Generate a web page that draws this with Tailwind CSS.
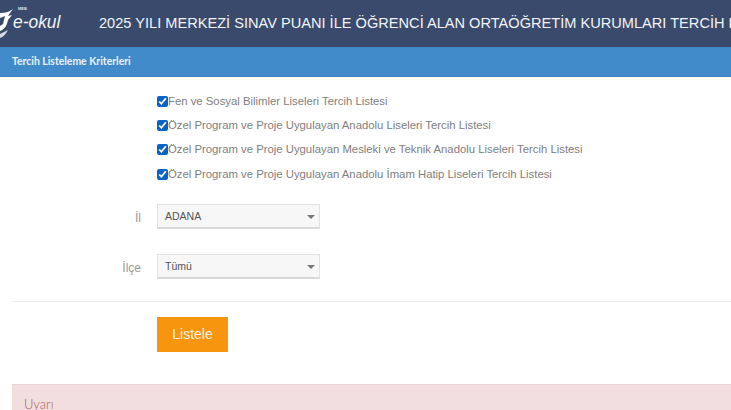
<!DOCTYPE html>
<html lang="tr">
<head>
	<title>Tercih Listeleme</title>
	<meta name="viewport" content="width=device-width, initial-scale=1">
	<script src="https://cdn.jsdelivr.net/npm/@tailwindcss/browser@4"></script>
</head>
<body>
	<div class="w-[731px] h-[410px] overflow-hidden bg-white font-['Liberation_Sans',sans-serif]">
		<!-- header -->
		<div class="flex items-center h-[47px] bg-[#3a4a6c] whitespace-nowrap">
			<div class="relative w-[99px] h-[47px] shrink-0">
				<svg class="absolute left-0 top-0" width="24" height="42" viewBox="0 0 24 42">
					<path d="M0 13 C5 13 9 12 13 9 C11 12 9 14 8 16 L12 15 L8 20 C7 25 5 29 0 31 Z" fill="#fff"/>
					<path d="M0 18 L5 16 L3 24 L0 26 Z" fill="#3a4a6c"/>
					<path d="M0 34 L8 30 C6 34 3 37 0 38 Z" fill="#d5dae4"/>
				</svg>
				<span class="absolute left-[18px] top-[6px] text-[4px] font-bold text-[#dfe3ea]">MEB</span>
				<span class="absolute left-[13px] top-[8px] text-[17.4px] leading-[26px] italic text-[#f2f4f7] scale-y-110 origin-left">e-okul</span>
			</div>
			<h1 class="text-[14.6px] text-[#f2f4f7]">2025 YILI MERKEZİ SINAV PUANI İLE ÖĞRENCİ ALAN ORTAÖĞRETİM KURUMLARI TERCİH PUANLARI</h1>
		</div>

		<!-- panel heading -->
		<div class="flex items-center h-[30px] px-3 bg-[#428bca] border-b border-[#3d80bb]">
			<span class="font-['Lato',sans-serif] text-[10.4px] font-bold text-[#eaf2fa]">Tercih Listeleme Kriterleri</span>
		</div>

		<!-- checkboxes -->
		<div class="flex flex-col pl-[157px] pt-[12px] text-[11.33px] text-[#808080] whitespace-nowrap">
			<label class="flex items-center h-[24.3px]"><input type="checkbox" checked class="w-[11px] h-[11px] accent-[#0b63c5]"><span>Fen ve Sosyal Bilimler Liseleri Tercih Listesi</span></label>
			<label class="flex items-center h-[24.3px]"><input type="checkbox" checked class="w-[11px] h-[11px] accent-[#0b63c5]"><span>Özel Program ve Proje Uygulayan Anadolu Liseleri Tercih Listesi</span></label>
			<label class="flex items-center h-[24.3px]"><input type="checkbox" checked class="w-[11px] h-[11px] accent-[#0b63c5]"><span>Özel Program ve Proje Uygulayan Mesleki ve Teknik Anadolu Liseleri Tercih Listesi</span></label>
			<label class="flex items-center h-[24.3px]"><input type="checkbox" checked class="w-[11px] h-[11px] accent-[#0b63c5]"><span>Özel Program ve Proje Uygulayan Anadolu İmam Hatip Liseleri Tercih Listesi</span></label>
		</div>

		<!-- selects -->
		<div class="flex flex-col gap-[25px] mt-[18px] text-[10.5px]">
			<div class="flex items-center">
				<span class="w-[142px] pr-[1px] pt-[2px] text-right text-[12px] text-[#999]">İl</span>
				<div class="flex items-center justify-between w-[163px] h-[25px] ml-[15px] pl-[7px] pr-[4px] pt-[2px] bg-[#f7f7f7] border border-[#e2e2e2] border-b-2 border-b-[#d8d8d8] text-[#555]">
					<span>ADANA</span>
					<span class="w-0 h-0 border-x-[4px] border-x-transparent border-t-[4px] border-t-[#777]"></span>
				</div>
			</div>
			<div class="flex items-center">
				<span class="w-[142px] pr-[1px] pt-[2px] text-right text-[12px] text-[#999]">İlçe</span>
				<div class="flex items-center justify-between w-[163px] h-[25px] ml-[15px] pl-[7px] pr-[4px] pt-[2px] bg-[#f7f7f7] border border-[#e2e2e2] border-b-2 border-b-[#d8d8d8] text-[#555]">
					<span>Tümü</span>
					<span class="w-0 h-0 border-x-[4px] border-x-transparent border-t-[4px] border-t-[#777]"></span>
				</div>
			</div>
		</div>

		<!-- button -->
		<div class="ml-[12px] mt-[22px] pt-[15px] border-t border-[#eee]">
			<button class="block ml-[145px] w-[71px] h-[35px] bg-[#f7950f] text-[14px] text-[#fdf3e0]">Listele</button>
		</div>

		<!-- warning -->
		<div class="ml-[12px] mt-[32px] h-[60px] pl-[12px] pt-[10px] bg-[#f2dede] border-t border-[#ecd5d8]">
			<span class="block font-['Lato',sans-serif] font-light text-[13px] text-[#b05a5c]">Uyarı</span>
		</div>
	</div>
</body>
</html>
